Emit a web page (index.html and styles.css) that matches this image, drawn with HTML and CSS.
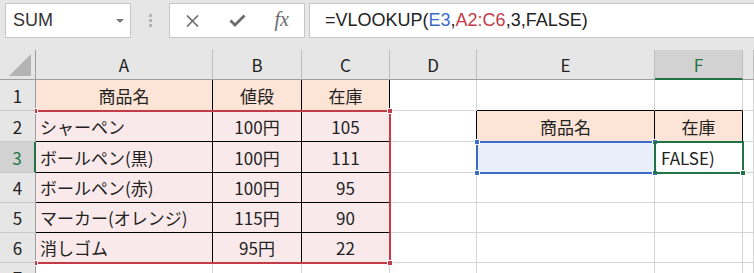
FILE: index.html
```html
<!DOCTYPE html>
<html lang="ja">
<head>
    <meta charset="UTF-8">
    <title>VLOOKUP</title>
    <link rel="stylesheet" href="styles.css">
</head>
<body>
    <div class="toolbar">
        <div class="namebox">
            <span class="name">SUM</span>
            <span class="caret"></span>
        </div>
        <div class="grip"><i></i><i></i><i></i></div>
        <div class="fbuttons">
            <span class="slot">
                <svg width="13" height="12" viewBox="0 0 13 12"><path d="M1 0.5 L12 11.5 M12 0.5 L1 11.5" stroke="#6b6b6b" stroke-width="1.6" fill="none"/></svg>
            </span>
            <span class="slot">
                <svg width="17" height="13" viewBox="0 0 17 13"><path d="M1.5 6.5 L6 11 L15.5 1.5" stroke="#6b6b6b" stroke-width="2.8" fill="none"/></svg>
            </span>
            <span class="slot"><span class="fx">fx</span></span>
        </div>
        <div class="formula">=VLOOKUP(<span class="ref-blue">E3</span>,<span class="ref-red">A2:C6</span>,3,FALSE)</div>
    </div>

    <div class="sheet-wrap">
        <div class="sheet">
            <!-- column headers -->
            <div class="c corner">
                <svg width="23" height="22" viewBox="0 0 23 22"><path d="M0 22 L22 22 L22 0 Z" fill="#b4b4b4"/></svg>
            </div>
            <div class="c ch">A</div>
            <div class="c ch">B</div>
            <div class="c ch">C</div>
            <div class="c ch">D</div>
            <div class="c ch">E</div>
            <div class="c ch sel-col">F</div>
            <div class="c ch"></div>

            <!-- row 1 -->
            <div class="c rh">1</div>
            <div class="c head ctr br">商品名</div>
            <div class="c head ctr br">値段</div>
            <div class="c head ctr br">在庫</div>
            <div class="c"></div>
            <div class="c bb"></div>
            <div class="c bb"></div>
            <div class="c"></div>

            <!-- row 2 -->
            <div class="c rh">2</div>
            <div class="c data br bb">シャーペン</div>
            <div class="c data ctr br bb">100円</div>
            <div class="c data ctr bb">105</div>
            <div class="c br"></div>
            <div class="c head ctr br bb">商品名</div>
            <div class="c head ctr br bb">在庫</div>
            <div class="c"></div>

            <!-- row 3 -->
            <div class="c rh sel-row">3</div>
            <div class="c data br bb">ボールペン(黒)</div>
            <div class="c data ctr br bb">100円</div>
            <div class="c data ctr bb">111</div>
            <div class="c"></div>
            <div class="c lookup"></div>
            <div class="c typing">FALSE)</div>
            <div class="c"></div>

            <!-- row 4 -->
            <div class="c rh">4</div>
            <div class="c data br bb">ボールペン(赤)</div>
            <div class="c data ctr br bb">100円</div>
            <div class="c data ctr bb">95</div>
            <div class="c"></div>
            <div class="c"></div>
            <div class="c"></div>
            <div class="c"></div>

            <!-- row 5 -->
            <div class="c rh">5</div>
            <div class="c data br bb">マーカー(オレンジ)</div>
            <div class="c data ctr br bb">115円</div>
            <div class="c data ctr bb">90</div>
            <div class="c"></div>
            <div class="c"></div>
            <div class="c"></div>
            <div class="c"></div>

            <!-- row 6 -->
            <div class="c rh">6</div>
            <div class="c data br">消しゴム</div>
            <div class="c data ctr br">95円</div>
            <div class="c data ctr">22</div>
            <div class="c"></div>
            <div class="c"></div>
            <div class="c"></div>
            <div class="c"></div>

            <!-- row 7 -->
            <div class="c rh">7</div>
            <div class="c"></div>
            <div class="c"></div>
            <div class="c"></div>
            <div class="c"></div>
            <div class="c"></div>
            <div class="c"></div>
            <div class="c"></div>
        </div>

        <!-- reference / selection outlines, same grid laid over the cells -->
        <div class="marks">
            <div class="rng rng-red">
                <span class="h h-tl"></span><span class="h h-tr"></span>
                <span class="h h-bl"></span><span class="h h-br"></span>
            </div>
            <div class="rng rng-blue">
                <span class="h h-tl"></span><span class="h h-tr"></span>
                <span class="h h-bl"></span><span class="h h-br"></span>
            </div>
            <div class="rng active">
                <span class="h h-br"></span>
            </div>
            <div class="rh-cover"></div>
        </div>
    </div>
</body>
</html>
```

FILE: styles.css
```css
body {
    margin: 0;
    width: 754px;
    height: 273px;
    overflow: hidden;
    background-color: #e6e6e6;
    font-family: "Noto Sans CJK JP", sans-serif;
}

/* formula bar */
.toolbar {
    display: flex;
    align-items: flex-start;
    height: 50px;
    padding-top: 3px;
    box-sizing: border-box;
}

.namebox {
    margin-left: 5px;
    width: 126px;
    height: 35px;
    box-sizing: border-box;
    background-color: #fff;
    border: 1px solid #c6c6c6;
    display: flex;
    align-items: center;
    justify-content: space-between;
    padding: 0 6px 0 7px;
}

.name {
    font: 18px "Liberation Sans", Arial, sans-serif;
    color: #333;
}

.caret {
    border-left: 4px solid transparent;
    border-right: 4px solid transparent;
    border-top: 4px solid #7a7a7a;
    margin-top: 1px;
}

.grip {
    width: 38px;
    display: flex;
    flex-direction: column;
    align-items: center;
    gap: 2px;
    padding-top: 11px;
}

.grip i {
    display: block;
    width: 3px;
    height: 3px;
    background-color: #b3b3b3;
}

.fbuttons {
    width: 136px;
    height: 35px;
    box-sizing: border-box;
    background-color: #fff;
    border: 1px solid #c6c6c6;
    display: flex;
    align-items: center;
}

.slot {
    flex: 1;
    display: flex;
    justify-content: center;
    align-items: center;
}

.fx {
    font: italic 20px "Liberation Serif", serif;
    color: #6b6b6b;
    margin-top: -2px;
}

.formula {
    flex: 1;
    height: 35px;
    box-sizing: border-box;
    margin-left: 4px;
    margin-right: -2px;
    background-color: #fff;
    border: 1px solid #c6c6c6;
    display: flex;
    align-items: center;
    padding-left: 15px;
    font: 18px "Liberation Sans", Arial, sans-serif;
    color: #222;
    white-space: pre;
}

.ref-blue {
    color: #3c6cc8;
}

.ref-red {
    color: #c43b48;
}

/* worksheet */
.sheet-wrap {
    display: grid;
}

.sheet,
.marks {
    grid-area: 1 / 1;
    display: grid;
    grid-template-columns: 36px 177px 89px 88px 87px 178px 88px 1fr;
    grid-template-rows: 30px 31px 31px 31px 30px 30px 30px 30px;
}

.sheet {
    background-color: #fff;
}

.marks {
    pointer-events: none;
}

.c {
    box-sizing: border-box;
    border-right: 1px solid #d4d4d4;
    border-bottom: 1px solid #d4d4d4;
    display: flex;
    align-items: center;
    padding: 0 4px;
    font-size: 17px;
    color: #222;
    white-space: nowrap;
    overflow: hidden;
    min-width: 0;
}

.corner {
    background-color: #e6e6e6;
    border-right-color: #9f9f9f;
    border-bottom-color: #9f9f9f;
    align-items: flex-end;
    justify-content: flex-end;
    padding: 0 3px 3px 0;
}

.ch {
    background-color: #e6e6e6;
    border-right-color: #bdbdbd;
    border-bottom-color: #9f9f9f;
    justify-content: center;
}

.rh {
    background-color: #e6e6e6;
    border-right-color: #9f9f9f;
    border-bottom-color: #c8c8c8;
    justify-content: center;
    padding: 0;
}

.sel-col {
    background-color: #d2d2d2;
    border-bottom: 2px solid #217346;
    color: #217346;
}

.sel-row {
    background-color: #d2d2d2;
    border-right: 2px solid #217346;
    color: #217346;
}

.ctr {
    justify-content: center;
}

.head {
    background-color: #fce4d6;
}

.data {
    background-color: #f9e9ea;
}

.lookup {
    background-color: #e8eff9;
}

.typing {
    padding-left: 6px;
}

.br {
    border-right-color: #000;
}

.bb {
    border-bottom-color: #000;
}

/* outlines drawn over the cells */
.rng {
    position: relative;
    box-sizing: border-box;
}

.rng-red {
    grid-row: 3 / 8;
    grid-column: 2 / 5;
    margin: -1px -1px -1px 0;
    border: 2px solid #c43b48;
    border-left: 0;
}

.rng-blue {
    grid-row: 4 / 5;
    grid-column: 6 / 7;
    margin: -1px;
    border: 2px solid #3c6cc8;
}

.active {
    grid-row: 4 / 5;
    grid-column: 7 / 8;
    margin: -1px;
    border: 2px solid #217346;
}

.rh-cover {
    grid-row: 3 / 9;
    grid-column: 1 / 2;
    margin-right: 1px;
    z-index: 1;
}

.h {
    position: absolute;
    width: 4px;
    height: 4px;
    border: 1px solid #fff;
}

.rng-red .h {
    background-color: #c43b48;
}

.rng-blue .h {
    background-color: #3c6cc8;
}

.active .h {
    background-color: #217346;
}

.h-tl { top: -4px; left: -4px; }
.h-tr { top: -4px; right: -4px; }
.h-bl { bottom: -4px; left: -4px; }
.h-br { bottom: -4px; right: -4px; }

.rng-red .h-tl,
.rng-red .h-bl {
    left: -1px;
    width: 2px;
    border-left: 0;
}
```
